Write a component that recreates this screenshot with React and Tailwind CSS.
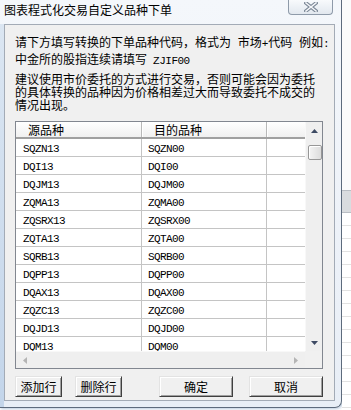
import React from 'react';

const cjk = "font-['Noto_Sans_CJK_SC',sans-serif]";
const mono = "font-['Liberation_Mono',monospace]";

const rows = [
    ['SQZN13', 'SQZN00'],
    ['DQI13', 'DQI00'],
    ['DQJM13', 'DQJM00'],
    ['ZQMA13', 'ZQMA00'],
    ['ZQSRX13', 'ZQSRX00'],
    ['ZQTA13', 'ZQTA00'],
    ['SQRB13', 'SQRB00'],
    ['DQPP13', 'DQPP00'],
    ['DQAX13', 'DQAX00'],
    ['ZQZC13', 'ZQZC00'],
    ['DQJD13', 'DQJD00'],
    ['DQM13', 'DQM00'],
];

function Arrow({ dir, color }) {
    const pts = {
        up: '0,4 3.5,0 7,4',
        down: '0,0 7,0 3.5,4',
        left: '4,0 4,7 0,3.5',
        right: '0,0 0,7 4,3.5',
    }[dir];
    const vertical = dir === 'up' || dir === 'down';
    return (
        <svg width={vertical ? 7 : 4} height={vertical ? 4 : 7}>
            <polygon points={pts} fill={color} />
        </svg>
    );
}

function Button({ label, width, className = '' }) {
    return (
        <button
            className={`${width} h-[21px] bg-[#f0f0f0] border border-t-[#e3e3e3] border-l-[#e3e3e3] border-r-[#404040] border-b-[#404040] shadow-[inset_1px_1px_0_#ffffff,inset_-1px_-1px_0_#a0a0a0] flex items-center justify-center text-[12px] leading-[12px] text-black ${className}`}
        >
            {label}
        </button>
    );
}

export default function App() {
    return (
        <div className={`w-[351px] h-[410px] overflow-hidden flex bg-white ${cjk}`}>
            {/* dialog window */}
            <div className="w-[342px] h-[408px] flex flex-col bg-gradient-to-b from-[#f4f7fb] to-[#e8eef6] border-r border-b border-[#5d6b7d] rounded-br-[7px] shadow-[1px_1px_3px_rgba(80,120,170,0.4)]">
                <div className="h-[24px] flex items-start">
                    <div className="pl-[4px] pt-[3px] text-[12px] leading-[13px] text-black whitespace-nowrap">
                        图表程式化交易自定义品种下单
                    </div>
                    <div className="ml-auto mr-[8px] w-[45px] h-[15px] rounded-b-[4px] border border-t-0 border-[#8e9aa9] bg-gradient-to-b from-[#f8fafc] to-[#e2e8ef] flex items-center justify-center">
                        <svg width="14" height="10" viewBox="0 0 14 10">
                            <path d="M2 1 L12 9 M12 1 L2 9" stroke="#7b8796" strokeWidth="3.6" strokeLinecap="square" />
                            <path d="M2 1 L12 9 M12 1 L2 9" stroke="#f4f6f9" strokeWidth="1.6" strokeLinecap="square" />
                        </svg>
                    </div>
                </div>

                <div className="flex flex-1">
                    <div className="w-[4px] bg-gradient-to-b from-[#dbe6f2] to-[#c3d5ea]"></div>
                    <div className="w-[331px] h-[377px] border border-[#a3abb6] bg-[#f0f0f0] px-[10px] pt-[10px] flex flex-col">
                        <div className="text-[12px] leading-[13.5px] text-black whitespace-nowrap">
                            <div>
                                请下方填写转换的下单品种代码，格式为
                                <span className={`${mono} text-[11px]`}> </span>市场<span className={`${mono} text-[11px]`}>+</span>代码
                                <span className={`${mono} text-[11px]`}> </span>例如<span className={`${mono} text-[11px]`}>:</span>
                            </div>
                            <div>
                                中金所的股指连续请填写<span className={`${mono} text-[11px] tracking-[-0.5px]`}> ZJIF00</span>
                            </div>
                        </div>
                        <div className="mt-[4px] text-[12px] leading-[13px] text-black whitespace-nowrap">
                            <div>建议使用市价委托的方式进行交易，否则可能会因为委托</div>
                            <div>的具体转换的品种因为价格相差过大而导致委托不成交的</div>
                            <div>情况出现。</div>
                        </div>

                        {/* grid */}
                        <div className="mt-[10px] w-[308px] h-[248px] border border-[#828790] bg-white flex flex-col">
                            <div className="flex h-[229px]">
                                <div className="w-[289px] overflow-hidden">
                                    <div className="flex h-[17px] border-b-2 border-[#a0a0a0] bg-gradient-to-b from-white to-[#f0f0f0] text-[12px] leading-[15px]">
                                        <div className="w-[126px] pl-[12px] border-r border-[#b8b8b8] shadow-[1px_0_0_#ffffff]">源品种</div>
                                        <div className="w-[125px] pl-[12px] border-r border-[#b8b8b8] shadow-[1px_0_0_#ffffff]">目的品种</div>
                                        <div className="w-[38px]"></div>
                                    </div>
                                    {rows.map(([src, dst]) => (
                                        <div key={src} className={`flex h-[18px] border-b border-[#c4c4c4] ${mono} text-[11px] tracking-[-0.6px] leading-[20px] text-black`}>
                                            <div className="w-[126px] pl-[7px] border-r border-[#c4c4c4]">{src}</div>
                                            <div className="w-[125px] pl-[6px] border-r border-[#c4c4c4]">{dst}</div>
                                            <div className="w-[38px]"></div>
                                        </div>
                                    ))}
                                </div>
                                <div className="w-[17px] bg-[#efefef] border-l border-[#f8f8f8] flex flex-col items-center">
                                    <div className="h-[17px] flex items-center justify-center">
                                        <Arrow dir="up" color="#3d4a63" />
                                    </div>
                                    <div className="mt-[6px] ml-[1px] w-[14px] h-[15px] rounded-[2px] border border-[#979797] bg-gradient-to-r from-[#f4f4f4] to-[#dcdcdc] shadow-[inset_1px_1px_0_#ffffff]"></div>
                                    <div className="mt-auto h-[17px] flex items-center justify-center">
                                        <Arrow dir="down" color="#3d4a63" />
                                    </div>
                                </div>
                            </div>
                            <div className="flex h-[17px]">
                                <div className="w-[289px] bg-[#efefef] border-t border-[#f8f8f8] flex items-center justify-between px-[7px]">
                                    <Arrow dir="left" color="#b4b4b4" />
                                    <Arrow dir="right" color="#b4b4b4" />
                                </div>
                                <div className="w-[17px] bg-[#f0f0f0]"></div>
                            </div>
                        </div>

                        <div className="mt-[7px] flex">
                            <Button label="添加行" width="w-[47px]" />
                            <Button label="删除行" width="w-[47px]" className="ml-[13px]" />
                            <Button label="确定" width="w-[74px]" className="ml-[37px]" />
                            <Button label="取消" width="w-[74px]" className="ml-[16px]" />
                        </div>
                    </div>
                    <div className="flex-1"></div>
                </div>
            </div>

            {/* background app behind the dialog */}
            <div className="flex-1 flex flex-col bg-[#fbfbfb]">
                <div className="h-[190px]"></div>
                <div className="h-[23px] bg-[#d9dcdf] border-y border-[#b9bec4]"></div>
                <div className="flex-1 bg-[repeating-linear-gradient(to_bottom,#ffffff_0px,#ffffff_12px,#e2e2e2_12px,#e2e2e2_13px)]"></div>
            </div>
        </div>
    );
}
